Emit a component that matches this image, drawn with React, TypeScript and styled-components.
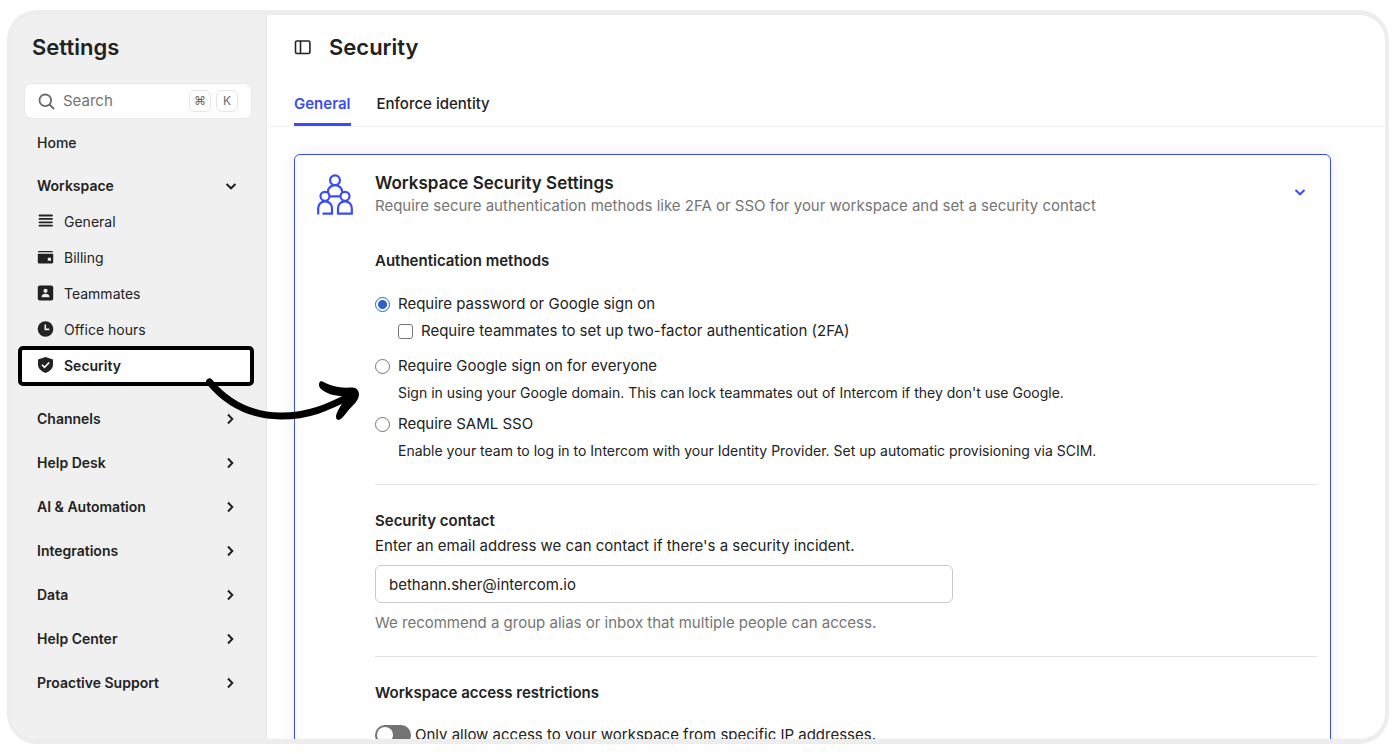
import React, { useState } from "react";
import styled, { createGlobalStyle, css } from "styled-components";

const ink = "#222222";
const muted = "#757575";
const accent = "#3b4cf6";

const GlobalStyle = createGlobalStyle`
  *, *::before, *::after { box-sizing: border-box; }
  body {
    margin: 0;
    background: #ffffff;
    color: ${ink};
    font-family: Inter, "Liberation Sans", sans-serif;
    font-size: 15px;
    line-height: 24px;
  }
  h1, h2, h3, p, ul { margin: 0; padding: 0; }
  ul { list-style: none; }
  button, input { font: inherit; color: inherit; }
  a { color: inherit; text-decoration: none; }
`;

const Page = styled.div`
  height: 100vh;
  padding: 10px 11px 10px 7px;
`;

const Frame = styled.div`
  display: flex;
  height: 100%;
  overflow: hidden;
  border: solid #ededed;
  border-width: 5px 4px;
  border-radius: 30px;
`;

const Sidebar = styled.aside`
  flex: none;
  width: 256px;
  padding: 18px 14px 0 13px;
  background: #f0f0f0;
  border-right: 1px solid #e6e6e6;
`;

const PageTitle = styled.h1`
  font-size: 22px;
  line-height: 28px;
  font-weight: 600;
`;

const SidebarTitle = styled(PageTitle)`
  padding-left: 8px;
`;

const SearchBox = styled.label`
  display: flex;
  align-items: center;
  gap: 8px;
  height: 36px;
  margin-top: 22px;
  padding: 0 13px;
  background: #ffffff;
  border: 1px solid #e9e9e9;
  border-radius: 8px;
`;

const SearchInput = styled.input`
  flex: 1;
  min-width: 0;
  padding: 0;
  border: 0;
  outline: 0;
  background: transparent;
  &::placeholder { color: #737373; opacity: 1; }
`;

const Keys = styled.span`
  display: flex;
  gap: 5px;
`;

const Key = styled.kbd`
  display: flex;
  align-items: center;
  justify-content: center;
  width: 22px;
  height: 22px;
  border: 1px solid #e6e6e6;
  border-radius: 6px;
  color: #6b6b6b;
  font-family: inherit;
  font-size: 12px;
`;

const HomeLink = styled.a`
  display: block;
  margin-top: 12px;
  padding-left: 13px;
  font-size: 14px;
  font-weight: 500;
`;

const SectionButton = styled.button`
  display: flex;
  align-items: center;
  justify-content: space-between;
  width: 100%;
  height: 44px;
  padding: 0 15px 0 13px;
  border: 0;
  background: transparent;
  font-size: 14px;
  font-weight: 600;
  text-align: left;
`;

const WorkspaceButton = styled(SectionButton)`
  height: 36px;
  margin-top: 13px;
`;

const SubItem = styled.li`
  position: relative;
  height: 36px;
`;

const SubLink = styled.a<{ $current?: boolean }>`
  display: flex;
  align-items: center;
  gap: 10px;
  height: 36px;
  padding-left: 13px;
  font-size: 14px;
  ${(p) =>
    p.$current &&
    css`
      height: 40px;
      margin: -2px -2px -2px -6px;
      padding-left: 15px;
      background: #ffffff;
      border: 4px solid #000000;
      border-radius: 5px;
      font-weight: 600;
    `}
`;

const SubIcon = styled.svg`
  flex: none;
  width: 17px;
  height: 16px;
  margin-bottom: 2px;
`;

const Arrow = styled.svg`
  position: absolute;
  z-index: 2;
  top: 28px;
  left: 176px;
  width: 165px;
  height: 50px;
  pointer-events: none;
`;

const Sections = styled.ul`
  margin-top: 15px;
`;

const Main = styled.main`
  display: flex;
  flex: 1;
  flex-direction: column;
  min-width: 0;
  overflow: hidden;
`;

const MainHeader = styled.header`
  display: flex;
  align-items: center;
  gap: 18px;
  padding: 18px 27px 0;
`;

const IconButton = styled.button`
  display: flex;
  padding: 0;
  border: 0;
  background: transparent;
`;

const Tabs = styled.nav`
  display: flex;
  flex: none;
  gap: 26px;
  height: 51px;
  margin-top: 15px;
  padding: 0 27px;
  border-bottom: 1px solid #f3f3f3;
`;

const Tab = styled.a<{ $active?: boolean }>`
  display: flex;
  align-items: center;
  padding-top: 8px;
  border-bottom: 3px solid ${(p) => (p.$active ? accent : "transparent")};
  color: ${(p) => (p.$active ? accent : ink)};
  font-weight: ${(p) => (p.$active ? 600 : 500)};
`;

const Card = styled.section`
  display: flex;
  flex: 1 0 auto;
  gap: 22px;
  margin: 27px 54px 0 27px;
  padding: 16px 13px 24px 22px;
  border: 1px solid ${accent};
  border-radius: 6px;
  box-shadow: 0 0 16px rgba(59, 77, 240, 0.1);
`;

const TeamIcon = styled.svg`
  flex: none;
  width: 36px;
  height: 41px;
  margin-top: 3px;
`;

const CardBody = styled.div`
  flex: 1;
  min-width: 0;
`;

const CardHeader = styled.div`
  display: flex;
  align-items: flex-start;
  justify-content: space-between;
  padding-right: 11px;
`;

const CollapseButton = styled.button`
  display: flex;
  padding: 15px 0 0;
  border: 0;
  background: transparent;
`;

const CardTitle = styled.h2`
  font-size: 17px;
  line-height: 24px;
  font-weight: 600;
`;

const Subtitle = styled.p`
  color: ${muted};
  line-height: 22px;
`;

const Methods = styled.fieldset`
  min-width: 0;
  margin: 32px 0 0;
  padding: 0;
  border: 0;
`;

const Legend = styled.legend`
  margin-bottom: 19px;
  padding: 0;
  font-weight: 600;
`;

const GroupTitle = styled.h3`
  font-size: 15px;
  font-weight: 600;
`;

const Choice = styled.label<{ $nested?: boolean; $gap?: number }>`
  display: flex;
  align-items: center;
  gap: 8px;
  margin-top: ${(p) => p.$gap ?? 0}px;
  margin-left: ${(p) => (p.$nested ? 23 : 0)}px;
`;

const Radio = styled.input`
  appearance: none;
  width: 15px;
  height: 15px;
  margin: 0;
  border: 1px solid #767676;
  border-radius: 50%;
  background: #ffffff;
  &:checked {
    border: 1px solid #2a62c9;
    background: radial-gradient(circle, #2a62c9 4px, #ffffff 5px);
  }
`;

const Tick = styled.input`
  appearance: none;
  width: 15px;
  height: 15px;
  margin: 0;
  border: 1px solid #767676;
  border-radius: 3px;
  background: #ffffff;
  &:checked { background: #2a62c9; }
`;

const Note = styled.p`
  margin: 3px 0 0 23px;
  font-size: 14px;
`;

const Rule = styled.hr`
  height: 1px;
  margin: 21px 0 24px;
  border: 0;
  background: #e3e3e3;
`;

const ContactLabel = styled.label`
  display: block;
  margin-top: 1px;
`;

const EmailInput = styled.input`
  display: block;
  width: 100%;
  max-width: 578px;
  height: 38px;
  margin: 7px 0 8px;
  padding: 0 13px;
  border: 1px solid #c9c9c9;
  border-radius: 6px;
  background: #ffffff;
`;

const Hint = styled.p`
  color: ${muted};
`;

const SwitchRow = styled.label`
  display: flex;
  align-items: center;
  gap: 4px;
  margin-top: 18px;
`;

const Switch = styled.input`
  appearance: none;
  display: flex;
  width: 36px;
  height: 20px;
  margin: 0;
  padding: 2px;
  border-radius: 10px;
  background: #737373;
  &::before {
    content: "";
    width: 16px;
    height: 16px;
    border-radius: 50%;
    background: #ffffff;
  }
  &:checked { justify-content: flex-end; background: ${accent}; }
`;

const Chevron = ({ down, color = ink }: { down?: boolean; color?: string }) => (
  <svg width="12" height="12" viewBox="0 0 12 12" fill="none" stroke={color} strokeWidth="2" aria-hidden="true">
    <path d={down ? "M1.5 4 6 8.3 10.5 4" : "M3 1.5 7.3 6 3 10.5"} />
  </svg>
);

const icons: Record<string, React.ReactNode> = {
  General: (
    <path d="M2.500 2.500h12.500M2.500 5.900h12.500M2.500 9.300h12.500M2.500 12.700h12.500" stroke={ink} strokeWidth="1.800" strokeLinecap="round" />
  ),
  Billing: (
    <>
      <path d="M2 2h13a1.200 1.200 0 0 1 1 1.200H.9A1.200 1.200 0 0 1 2 2Z" fill={ink} />
      <path fillRule="evenodd" d="M.8 4.800h15.400v8.400a1.400 1.400 0 0 1-1.400 1.400H2.200a1.400 1.400 0 0 1-1.400-1.400Zm10 4v3h3.200v-3Z" fill={ink} />
    </>
  ),
  Teammates: (
    <>
      <rect x=".8" y=".5" width="15.400" height="15" rx="2" fill={ink} />
      <circle cx="8.500" cy="5.800" r="2.100" fill="#f0f0f0" />
      <path d="M4.500 12.200c0-2.400 1.800-3.400 4-3.400s4 1 4 3.400Z" fill="#f0f0f0" />
    </>
  ),
  "Office hours": (
    <>
      <circle cx="8.500" cy="8" r="7.800" fill={ink} />
      <path d="M8.300 3.400v5h4" fill="none" stroke="#f0f0f0" strokeWidth="1.600" />
    </>
  ),
  Security: (
    <>
      <path d="M8.500 0 16 2.400v5.200c0 3.800-3 6.800-7.500 8.400C4 14.400 1 11.400 1 7.600V2.400Z" fill={ink} />
      <path d="m5 7.800 2.500 2.500 4.700-4.800" fill="none" stroke="#ffffff" strokeWidth="1.600" />
    </>
  ),
};

const workspaceItems = ["General", "Billing", "Teammates", "Office hours", "Security"];
const sections = ["Channels", "Help Desk", "AI & Automation", "Integrations", "Data", "Help Center", "Proactive Support"];

export default function App() {
  const [method, setMethod] = useState("password");
  const [email, setEmail] = useState("bethann.sher@intercom.io");
  const pick = (value: string) => ({
    type: "radio",
    name: "method",
    checked: method === value,
    onChange: () => setMethod(value),
  });

  return (
    <Page>
      <GlobalStyle />
      <Frame>
        <Sidebar>
          <SidebarTitle as="h2">Settings</SidebarTitle>
          <SearchBox>
            <svg width="17" height="17" viewBox="0 0 17 17" fill="none" stroke="#6b6b6b" strokeWidth="1.800" aria-hidden="true">
              <circle cx="7.300" cy="7.300" r="5.800" />
              <path d="m11.500 11.500 4.500 4.500" />
            </svg>
            <SearchInput type="text" placeholder="Search" aria-label="Search" />
            <Keys>
              <Key>⌘</Key>
              <Key>K</Key>
            </Keys>
          </SearchBox>
          <nav aria-label="Settings">
            <HomeLink href="#home">Home</HomeLink>
            <WorkspaceButton type="button" aria-expanded="true">
              Workspace
              <Chevron down />
            </WorkspaceButton>
            <ul>
              {workspaceItems.map((name) => {
                const current = name === "Security";
                return (
                  <SubItem key={name}>
                    <SubLink href={"#" + name} $current={current} aria-current={current ? "page" : undefined}>
                      <SubIcon viewBox="0 0 17 16" aria-hidden="true">{icons[name]}</SubIcon>
                      {name}
                    </SubLink>
                    {current && (
                      <Arrow viewBox="0 0 165 50" aria-hidden="true">
                        <path d="M9.500 8C27 29 49 41.500 80 42c28 .3 48-8.500 72-21" fill="none" stroke="#000" strokeWidth="7" strokeLinecap="round" />
                        <path d="M120 7.500c2-1 5 1.500 9 3 8 3 15 3.500 23 3 4-.4 7 3 7 7 0 5-5 10-9 14-4 4-6 9-11 11.500-3 0-3.500-3-2.500-6 2-5 4-8 6-11l-6-2 6-5c-8 0-17-2.500-22-7.500-2-2-2-5-.5-7Z" fill="#000" />
                      </Arrow>
                    )}
                  </SubItem>
                );
              })}
            </ul>
            <Sections>
              {sections.map((name) => (
                <li key={name}>
                  <SectionButton type="button" aria-expanded="false">
                    {name}
                    <Chevron />
                  </SectionButton>
                </li>
              ))}
            </Sections>
          </nav>
        </Sidebar>
        <Main>
          <MainHeader>
            <IconButton type="button" aria-label="Toggle sidebar">
              <svg width="17" height="16" viewBox="0 0 17 16" fill="none" stroke={ink} strokeWidth="1.600">
                <rect x="1.500" y="2" width="14.400" height="12.500" rx="1.500" />
                <path d="M6.500 2v12.500" />
              </svg>
            </IconButton>
            <PageTitle>Security</PageTitle>
          </MainHeader>
          <Tabs>
            <Tab href="#general" $active>General</Tab>
            <Tab href="#identity">Enforce identity</Tab>
          </Tabs>
          <Card>
            <TeamIcon viewBox="0 0 36 41" fill="none" stroke={accent} strokeWidth="2.200" aria-hidden="true">
              <circle cx="18" cy="6.300" r="4.900" />
              <circle cx="8" cy="22.300" r="4.500" />
              <circle cx="28" cy="22.300" r="4.500" />
              <path d="M10.900 19v-1.200a7.100 6.600 0 0 1 14.200 0V19M12.500 22.300h11" />
              <path d="M1.200 40.500v-6.200a6.900 7 0 0 1 13.800 0v5.300H5.500" />
              <path d="M21 39.600v-5.300a6.900 7 0 0 1 13.800 0v5.300Z" />
            </TeamIcon>
            <CardBody>
              <CardHeader>
                <div>
                  <CardTitle>Workspace Security Settings</CardTitle>
                  <Subtitle>Require secure authentication methods like 2FA or SSO for your workspace and set a security contact</Subtitle>
                </div>
                <CollapseButton type="button" aria-label="Collapse section">
                  <Chevron down color={accent} />
                </CollapseButton>
              </CardHeader>
              <Methods>
                <Legend>Authentication methods</Legend>
                <Choice>
                  <Radio {...pick("password")} />
                  Require password or Google sign on
                </Choice>
                <Choice $nested $gap={3}>
                  <Tick type="checkbox" />
                  Require teammates to set up two-factor authentication (2FA)
                </Choice>
                <Choice $gap={11}>
                  <Radio {...pick("google")} />
                  Require Google sign on for everyone
                </Choice>
                <Note>Sign in using your Google domain. This can lock teammates out of Intercom if they don't use Google.</Note>
                <Choice $gap={7}>
                  <Radio {...pick("saml")} />
                  Require SAML SSO
                </Choice>
                <Note>Enable your team to log in to Intercom with your Identity Provider. Set up automatic provisioning via SCIM.</Note>
              </Methods>
              <Rule />
              <GroupTitle>Security contact</GroupTitle>
              <ContactLabel htmlFor="contact">Enter an email address we can contact if there's a security incident.</ContactLabel>
              <EmailInput id="contact" type="email" value={email} onChange={(e) => setEmail(e.target.value)} />
              <Hint>We recommend a group alias or inbox that multiple people can access.</Hint>
              <Rule />
              <GroupTitle>Workspace access restrictions</GroupTitle>
              <SwitchRow>
                <Switch type="checkbox" role="switch" />
                Only allow access to your workspace from specific IP addresses.
              </SwitchRow>
            </CardBody>
          </Card>
        </Main>
      </Frame>
    </Page>
  );
}
